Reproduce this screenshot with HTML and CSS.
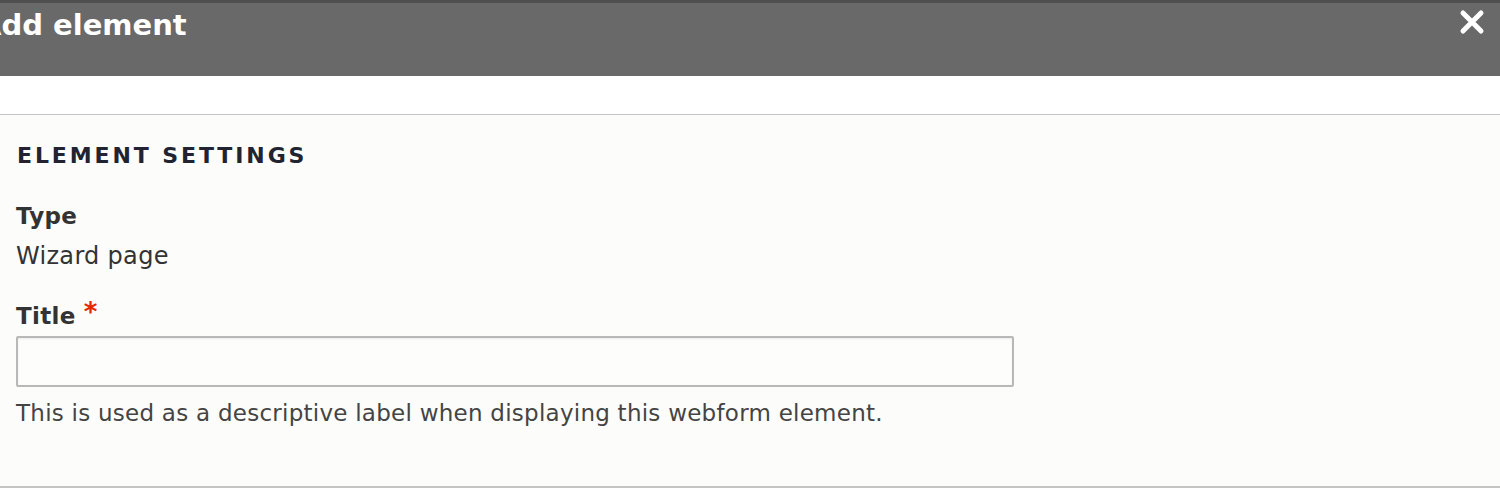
FILE: index.html
```html
<!DOCTYPE html>
<html>
<head>
<meta charset="utf-8">
<link rel="stylesheet" href="styles.css">
</head>
<body>
<div class="dialog">
  <div class="titlebar">
    <span class="title">Add element</span>
    <button class="close" aria-label="Close">
      <svg width="26" height="26" viewBox="0 0 26 26"><path d="M4 4 L22 22 M22 4 L4 22" stroke="#fff" stroke-width="5" stroke-linecap="round"/></svg>
    </button>
  </div>
  <div class="content">
    <fieldset class="settings">
      <div class="legend">ELEMENT SETTINGS</div>
      <div class="item first">
        <div class="label">Type</div>
        <div class="value">Wizard page</div>
      </div>
      <div class="item second">
        <label class="label">Title <span class="req">*</span></label>
        <input class="text" type="text">
        <div class="desc">This is used as a descriptive label when displaying this webform element.</div>
      </div>
    </fieldset>
  </div>
</div>
</body>
</html>
```
FILE: styles.css
```css
html, body { margin: 0; padding: 0; background: #fff; }
body { font-family: "DejaVu Sans", Verdana, sans-serif; color: #333; overflow: hidden; }
.dialog { width: 1500px; }
.titlebar {
  height: 73px;
  background: #696969;
  border-top: 3px solid #4f4f4f;
  display: flex;
  align-items: flex-start;
  justify-content: space-between;
}
.title {
  color: #fff;
  font-weight: bold;
  font-size: 29px;
  margin-left: -21px;
  padding-top: 5px;
  white-space: nowrap;
}
.close {
  background: none;
  border: 0;
  padding: 0;
  margin-right: 15px;
  margin-top: 6px;
  width: 26px;
  height: 26px;
  display: flex;
}
.content { padding-top: 38px; }
.settings {
  margin: 0;
  border: 0;
  border-top: 1px solid #c4c4c2;
  border-bottom: 2px solid #c4c4c2;
  background: #fcfcfa;
  padding: 28px 16px 50px;
  height: 374px;
  box-sizing: border-box;
}
.legend {
  font-weight: bold;
  font-size: 22px;
  letter-spacing: 2.9px;
  color: #222330;
  margin-left: 1px;
}
.item.first { margin-top: 35px; }
.item.second { margin-top: 27px; }
.label { display: block; font-weight: bold; font-size: 23px; letter-spacing: 0.3px; color: #333; }
.value { font-size: 24px; letter-spacing: 0.3px; margin-top: 13px; }
.req { color: #e62600; font-size: 26px; vertical-align: 3px; }
.text {
  display: block;
  box-sizing: border-box;
  width: 998px;
  height: 51px;
  margin-top: 7px;
  border: 2px solid #b8b8b8;
  border-radius: 2px;
  background: #fdfdfb;
  box-shadow: inset 0 1px 2px rgba(0,0,0,0.08);
}
.desc { font-size: 23px; letter-spacing: 0.25px; margin-top: 13px; color: #444; }
```
